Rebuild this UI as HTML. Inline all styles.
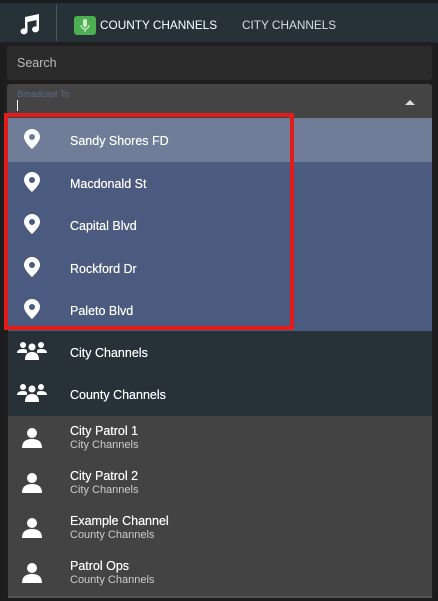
<!DOCTYPE html>
<html><head><style>
*{margin:0;padding:0;box-sizing:border-box}
body{width:438px;height:601px;background:#1c1c1c;font-family:"Liberation Sans",sans-serif;position:relative;overflow:hidden;color:#fff}
.hdr{position:absolute;left:0;top:3px;width:438px;height:40px;background:#263238}
.abs{position:absolute}
.panel{position:absolute;left:3px;top:42px;width:432px;height:557px;background:#1e1e1e}
.row{position:absolute;left:8px;width:424px;font-size:12.5px;font-weight:normal;text-shadow:0 0 0.4px #fff}
.row .t{position:absolute;left:62px}
.ic{position:absolute;left:16px}
</style></head><body>
<div class="hdr">
 <svg class="abs" style="left:17px;top:10px" width="24" height="22" viewBox="0 0 24 22"><path d="M22 1 L8 4 V15.5 A3.5 3 0 1 0 10.5 18.5 V9 L19.5 7 V13.5 A3.5 3 0 1 0 22 16.5 Z" fill="#fff"/></svg>
 <div class="abs" style="left:56px;top:2px;width:1px;height:36px;background:#4a5660"></div>
 <div class="abs" style="left:74px;top:13px;width:22px;height:19px;background:#4caf50;border-radius:3px"><svg width="22" height="19" viewBox="0 0 22 19"><rect x="9" y="3" width="4" height="8" rx="2" fill="#cfe8cf"/><path d="M7 9 A4 4 0 0 0 15 9 M11 13 V16" stroke="#cfe8cf" stroke-width="1.2" fill="none"/></svg></div>
 <div class="abs" style="left:100px;top:15px;font-size:11.8px;color:#fff">COUNTY CHANNELS</div>
 <div class="abs" style="left:242px;top:15px;font-size:11.8px;color:#ddd">CITY CHANNELS</div>
</div>
<div class="panel"></div>
<div class="abs" style="left:7px;top:46px;width:425px;height:34px;background:#2b2b2b;border-radius:3px"></div>
<div class="abs" style="left:17px;top:56px;font-size:12.5px;color:#bbb">Search</div>
<div class="abs" style="left:7px;top:84px;width:425px;height:34px;background:#444;border-radius:3px 3px 0 0"></div>
<div class="abs" style="left:17px;top:89px;font-size:9px;color:#5a6a8e">Broadcast To</div>
<div class="abs" style="left:17px;top:100px;width:1px;height:11px;background:#fff"></div>
<div class="abs" style="left:405px;top:100px;width:0;height:0;border-left:5px solid transparent;border-right:5px solid transparent;border-bottom:5px solid #ddd"></div>
<div class="abs" style="left:8px;top:118px;width:424px;height:213px;background:#4b5b7f"></div>
<div class="abs" style="left:8px;top:118px;width:424px;height:44px;background:#6f7d99"></div>
<div class="abs" style="left:8px;top:331px;width:424px;height:85px;background:#263238"></div>
<div class="abs" style="left:8px;top:416px;width:424px;height:180px;background:#434343"></div>

<div class="row" style="top:134px"><svg class="ic" style="left:15px;top:-6px" width="18" height="22" viewBox="0 0 18 22"><path d="M9 1 A8 8 0 0 0 1 9 C1 14 9 21 9 21 C9 21 17 14 17 9 A8 8 0 0 0 9 1Z M9 6 A3 3 0 1 1 9 12 A3 3 0 1 1 9 6Z" fill="#fff" fill-rule="evenodd"/></svg><span class="t">Sandy Shores FD</span></div>
<div class="row" style="top:177px"><svg class="ic" style="left:15px;top:-6px" width="18" height="22" viewBox="0 0 18 22"><path d="M9 1 A8 8 0 0 0 1 9 C1 14 9 21 9 21 C9 21 17 14 17 9 A8 8 0 0 0 9 1Z M9 6 A3 3 0 1 1 9 12 A3 3 0 1 1 9 6Z" fill="#fff" fill-rule="evenodd"/></svg><span class="t">Macdonald St</span></div>
<div class="row" style="top:219px"><svg class="ic" style="left:15px;top:-6px" width="18" height="22" viewBox="0 0 18 22"><path d="M9 1 A8 8 0 0 0 1 9 C1 14 9 21 9 21 C9 21 17 14 17 9 A8 8 0 0 0 9 1Z M9 6 A3 3 0 1 1 9 12 A3 3 0 1 1 9 6Z" fill="#fff" fill-rule="evenodd"/></svg><span class="t">Capital Blvd</span></div>
<div class="row" style="top:262px"><svg class="ic" style="left:15px;top:-6px" width="18" height="22" viewBox="0 0 18 22"><path d="M9 1 A8 8 0 0 0 1 9 C1 14 9 21 9 21 C9 21 17 14 17 9 A8 8 0 0 0 9 1Z M9 6 A3 3 0 1 1 9 12 A3 3 0 1 1 9 6Z" fill="#fff" fill-rule="evenodd"/></svg><span class="t">Rockford Dr</span></div>
<div class="row" style="top:304px"><svg class="ic" style="left:15px;top:-6px" width="18" height="22" viewBox="0 0 18 22"><path d="M9 1 A8 8 0 0 0 1 9 C1 14 9 21 9 21 C9 21 17 14 17 9 A8 8 0 0 0 9 1Z M9 6 A3 3 0 1 1 9 12 A3 3 0 1 1 9 6Z" fill="#fff" fill-rule="evenodd"/></svg><span class="t">Paleto Blvd</span></div>

<div class="abs" style="left:4px;top:113px;width:290px;height:217px;border:4px solid #e21b1b"></div>

<div class="row" style="top:346px"><svg class="ic" style="left:9px;top:-5px" width="30" height="20" viewBox="0 0 30 20"><circle cx="6" cy="4" r="3" fill="#fff"/><circle cx="24" cy="4" r="3" fill="#fff"/><circle cx="15" cy="6" r="3.5" fill="#fff"/><path d="M0 12 Q0 8 6 8 Q10 8 10 10 L10 12Z M20 10 Q20 8 24 8 Q30 8 30 12 L20 12Z M8 19 Q8 11 15 11 Q22 11 22 19Z" fill="#fff"/></svg><span class="t">City Channels</span></div>
<div class="row" style="top:388px"><svg class="ic" style="left:9px;top:-5px" width="30" height="20" viewBox="0 0 30 20"><circle cx="6" cy="4" r="3" fill="#fff"/><circle cx="24" cy="4" r="3" fill="#fff"/><circle cx="15" cy="6" r="3.5" fill="#fff"/><path d="M0 12 Q0 8 6 8 Q10 8 10 10 L10 12Z M20 10 Q20 8 24 8 Q30 8 30 12 L20 12Z M8 19 Q8 11 15 11 Q22 11 22 19Z" fill="#fff"/></svg><span class="t">County Channels</span></div>

<div class="row" style="top:424px"><svg class="ic" style="left:13px;top:3px" width="22" height="22" viewBox="0 0 22 22"><circle cx="11" cy="6" r="5" fill="#fff"/><path d="M1 21 Q1 12 11 12 Q21 12 21 21Z" fill="#fff"/></svg><span class="t">City Patrol 1</span><span class="t" style="top:15px;font-size:11px;color:#ccc;text-shadow:none">City Channels</span></div>
<div class="row" style="top:469px"><svg class="ic" style="left:13px;top:3px" width="22" height="22" viewBox="0 0 22 22"><circle cx="11" cy="6" r="5" fill="#fff"/><path d="M1 21 Q1 12 11 12 Q21 12 21 21Z" fill="#fff"/></svg><span class="t">City Patrol 2</span><span class="t" style="top:15px;font-size:11px;color:#ccc;text-shadow:none">City Channels</span></div>
<div class="row" style="top:514px"><svg class="ic" style="left:13px;top:3px" width="22" height="22" viewBox="0 0 22 22"><circle cx="11" cy="6" r="5" fill="#fff"/><path d="M1 21 Q1 12 11 12 Q21 12 21 21Z" fill="#fff"/></svg><span class="t">Example Channel</span><span class="t" style="top:15px;font-size:11px;color:#ccc;text-shadow:none">County Channels</span></div>
<div class="row" style="top:559px"><svg class="ic" style="left:13px;top:3px" width="22" height="22" viewBox="0 0 22 22"><circle cx="11" cy="6" r="5" fill="#fff"/><path d="M1 21 Q1 12 11 12 Q21 12 21 21Z" fill="#fff"/></svg><span class="t">Patrol Ops</span><span class="t" style="top:15px;font-size:11px;color:#ccc;text-shadow:none">County Channels</span></div>
<div class="abs" style="left:8px;top:596px;width:424px;height:2px;background:#555"></div>
</body></html>
